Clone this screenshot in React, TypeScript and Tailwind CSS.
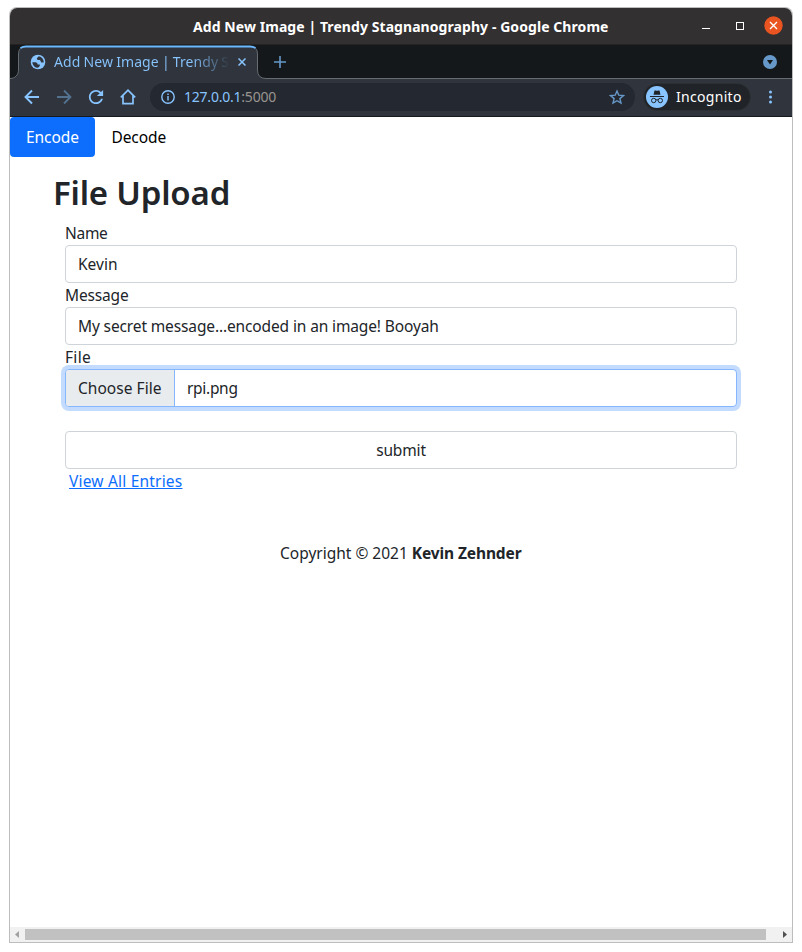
import React from "react";

function TitleBar() {
  return (
    <div className="flex h-[37px] shrink-0 items-center border-b border-[#242322] bg-[#333031] pl-[183px] pr-[9px] text-white">
      <span className="whitespace-nowrap pt-px text-[14px] font-bold leading-5 tracking-[0.070px]">Add New Image | Trendy Stagnanography - Google Chrome</span>
      <div className="ml-auto flex items-center pb-px">
        <svg width="8" height="12" className="mr-[26px]"><path d="M0 8.5h8" stroke="white" /></svg>
        <svg width="8" height="8" className="mr-[20px]"><rect x=".5" y=".5" width="7" height="7" fill="none" stroke="white" /></svg>
        <svg width="19" height="19"><circle cx="9.5" cy="9.5" r="9.2" fill="#e95420" /><path d="M6 6l7 7M13 6l-7 7" stroke="white" strokeWidth="1.4" /></svg>
      </div>
    </div>
  );
}

function TabStrip() {
  return (
    <div className="relative flex h-[34px] shrink-0 bg-[#14181b]">
      <svg className="absolute left-0 top-0" width="783" height="34">
        <path d="M0 33.500C5 33.500 8.500 30 8.500 25V9Q8.500 1.500 16 1.500H240Q247.500 1.500 247.500 9V25Q247.500 33.500 256 33.500H783V36H0Z" fill="#30353d" stroke="#656c72" />
        <path d="M10.500 3Q13 1.500 16 1.500H240Q243 1.500 245.500 3" fill="none" stroke="#6bb8ff" strokeWidth="2" />
      </svg>
      <div className="relative flex w-[248px] items-center pl-[20px] text-[#88c4ff]">
        <svg width="16" height="16" viewBox="0 0 16 16">
          <circle cx="8" cy="8" r="7.300" fill="#88c4ff" />
          <path d="M8.800 2.300L6.800 4.300 7.500 6H10L11.300 8.500H13.700A5.700 5.700 0 0 0 8.800 2.300ZM2.300 8.200H5.500Q7.700 8.500 7.700 10.500H9.800V12L8 13.800A5.800 5.800 0 0 1 2.300 8.200Z" fill="#30353d" />
        </svg>
        <span className="ml-[8px] w-[176px] overflow-hidden whitespace-nowrap bg-linear-to-r from-[#88c4ff] from-78% to-transparent bg-clip-text text-[14px] leading-5 tracking-[0.060px] text-transparent [word-spacing:-0.5px]">Add New Image | Trendy S</span>
        <svg className="ml-[8px] shrink-0" width="8" height="8"><path d="M.5.5l7 7M7.500.500l-7 7" stroke="#88c4ff" strokeWidth="1.5" /></svg>
      </div>
      <svg className="relative ml-[16px] mt-[11px]" width="12" height="12"><path d="M0 6h12M6 0v12" stroke="#6699c9" strokeWidth="1.6" /></svg>
      <svg className="relative ml-auto mr-[15px] mt-[10px]" width="14" height="14"><circle cx="7" cy="7" r="7" fill="#6699c9" /><path d="M4 5h6L7 9.500Z" fill="#14181b" /></svg>
    </div>
  );
}

function Toolbar() {
  return (
    <div className="flex h-[38px] shrink-0 items-center border-b border-[#171a1d] bg-[#30353d] pb-px pl-[14px] text-[#88c4ff]">
      <svg width="16" height="16" fill="none" stroke="currentColor" strokeWidth="1.9"><path d="M15 8H2M8 1.500L1.500 8 8 14.500" /></svg>
      <svg className="ml-[16px] text-[#527290]" width="16" height="16" fill="none" stroke="currentColor" strokeWidth="1.8"><path d="M1 8h13M8 1.500L14.500 8 8 14.500" /></svg>
      <svg className="ml-[16px]" width="16" height="16" viewBox="3 3 18 18" fill="currentColor"><path d="M17.650 6.350C16.200 4.900 14.210 4 12 4c-4.420 0-7.990 3.580-7.990 8s3.570 8 7.990 8c3.730 0 6.840-2.550 7.730-6h-2.080c-.82 2.330-3.040 4-5.650 4-3.310 0-6-2.690-6-6s2.690-6 6-6c1.660 0 3.140.69 4.220 1.780L13 11h7V4l-2.350 2.350z" /></svg>
      <svg className="ml-[16px]" width="16" height="16" fill="none" stroke="currentColor" strokeWidth="1.7"><path d="M.8 8.300L8 1.200l7.200 7.100M3 6.800v7.900h10V6.800" /></svg>
      <div className="ml-[14px] flex h-[28px] w-[485px] items-center rounded-full bg-[#242830] pl-[11px] pr-[10px]">
        <svg width="14" height="14" fill="none" stroke="currentColor" strokeWidth="1.4"><circle cx="7" cy="7" r="6.200" /><path d="M7 6v4.500M7 3.500v1.500" /></svg>
        <span className="ml-[9px] whitespace-nowrap text-[14px] leading-5 tracking-[-0.22px]">127.0.0.1<span className="text-[#989490]">:5000</span></span>
        <svg className="ml-auto text-[#6699c9]" width="16" height="16" viewBox="0 0 16 16"><path d="M8 2l1.800 4.200 4.600.4-3.500 3 1.100 4.500L8 11.700l-4 2.400 1.100-4.500-3.500-3 4.600-.4Z" fill="none" stroke="currentColor" strokeWidth="1.400" /></svg>
      </div>
      <div className="ml-[8px] flex h-[28px] w-[108px] items-center rounded-full border border-[#2c3033] bg-[#202428] pl-[2px]">
        <svg width="22" height="22" viewBox="0 0 22 22">
          <circle cx="11" cy="11" r="11" fill="#88c4ff" />
          <path d="M7.500 8.700l1-4.200h1.300q1.200.5 2.400 0h1.300l1 4.200Z" fill="#202428" /><path d="M4 10.500h14" stroke="#202428" strokeWidth="1" />
          <g fill="none" stroke="#202428" strokeWidth="1"><circle cx="7.700" cy="14.500" r="2.200" /><circle cx="14.300" cy="14.500" r="2.200" /><path d="M9.900 14q1.100-.6 2.200 0" /></g>
        </svg>
        <span className="ml-[8px] text-[14px] leading-5 tracking-[0.3px] text-white">Incognito</span>
      </div>
      <svg className="ml-[17px]" width="4" height="14" fill="currentColor"><circle cx="2.500" cy="2" r="1.500" /><circle cx="2.500" cy="7" r="1.500" /><circle cx="2.500" cy="12" r="1.500" /></svg>
    </div>
  );
}

const control = "flex h-[38px] w-full items-center rounded-[4px] border bg-white";

export default function App() {
  return (
    <div className="h-[952px] w-[802px] overflow-hidden bg-white pl-[9px] pt-[8px] font-['Noto_Sans',sans-serif] text-[#212529]">
      <div className="flex h-[935px] w-[784px] flex-col overflow-hidden rounded-t-[8px] border border-t-0 border-[#bdbdbd] shadow-[0_-1px_0_#bdbdbd]">
        <TitleBar />
        <TabStrip />
        <Toolbar />
        <main className="min-h-0 flex-1 text-[15.500px] leading-[24px]">
          <nav className="flex h-[40px]">
            <a className="flex w-[85px] items-center rounded-[4px] bg-[#0d6efd] pl-[16px] tracking-[-0.05px] text-white">Encode</a>
            <a className="flex items-center pl-[16.500px] tracking-[-0.1px] text-black">Decode</a>
          </nav>
          <h1 className="ml-[43px] mt-[16px] h-[48px] whitespace-nowrap text-[33px] font-semibold leading-[39px] tracking-[-0.2px]">File Upload</h1>
          <form className="ml-[55px] w-[672px]">
            <label className="block h-[24px] tracking-[-0.3px]">Name</label>
            <div className={control + " border-[#ced4da] pl-[12px]"}>Kevin</div>
            <label className="block h-[24px] tracking-[-0.15px]">Message</label>
            <div className={control + " border-[#ced4da] pl-[12px] tracking-[-0.13px]"}>My secret message...encoded in an image! Booyah</div>
            <label className="block h-[24px] tracking-[0.3px]">File</label>
            <div className={control + " overflow-hidden border-[#86b7fe] shadow-[0_0_0_4px_#c2dbff]"}>
              <span className="flex h-full w-[109px] shrink-0 items-center whitespace-nowrap border-r border-[#86b7fe] bg-[#e9ecef] pl-[12px] tracking-[0.04px]">Choose File</span>
              <span className="pl-[12px] tracking-[-0.3px]">rpi.png</span>
            </div>
            <button type="button" className={control + " mt-[24px] justify-center border-[#ced4da] tracking-[-0.15px]"}>submit</button>
            <a className="ml-[4px] block h-[24px] tracking-[0.2px] text-[#0d6efd] underline">View All Entries</a>
          </form>
          <footer className="ml-[270px] mt-[48px] whitespace-nowrap">Copyright © 2021 <b className="tracking-[-0.12px]">Kevin Zehnder</b></footer>
        </main>
        <div className="flex h-[15px] shrink-0 items-center bg-[#f1f1f1]">
          <svg width="15" height="15"><path d="M9 4v7L5 7.500Z" fill="#a3a3a3" /></svg>
          <div className="h-[11px] w-[741px] bg-[#c1c1c1]" />
          <svg className="ml-auto" width="15" height="15"><path d="M6 4v7l4-3.500Z" fill="#505050" /></svg>
        </div>
      </div>
    </div>
  );
}
